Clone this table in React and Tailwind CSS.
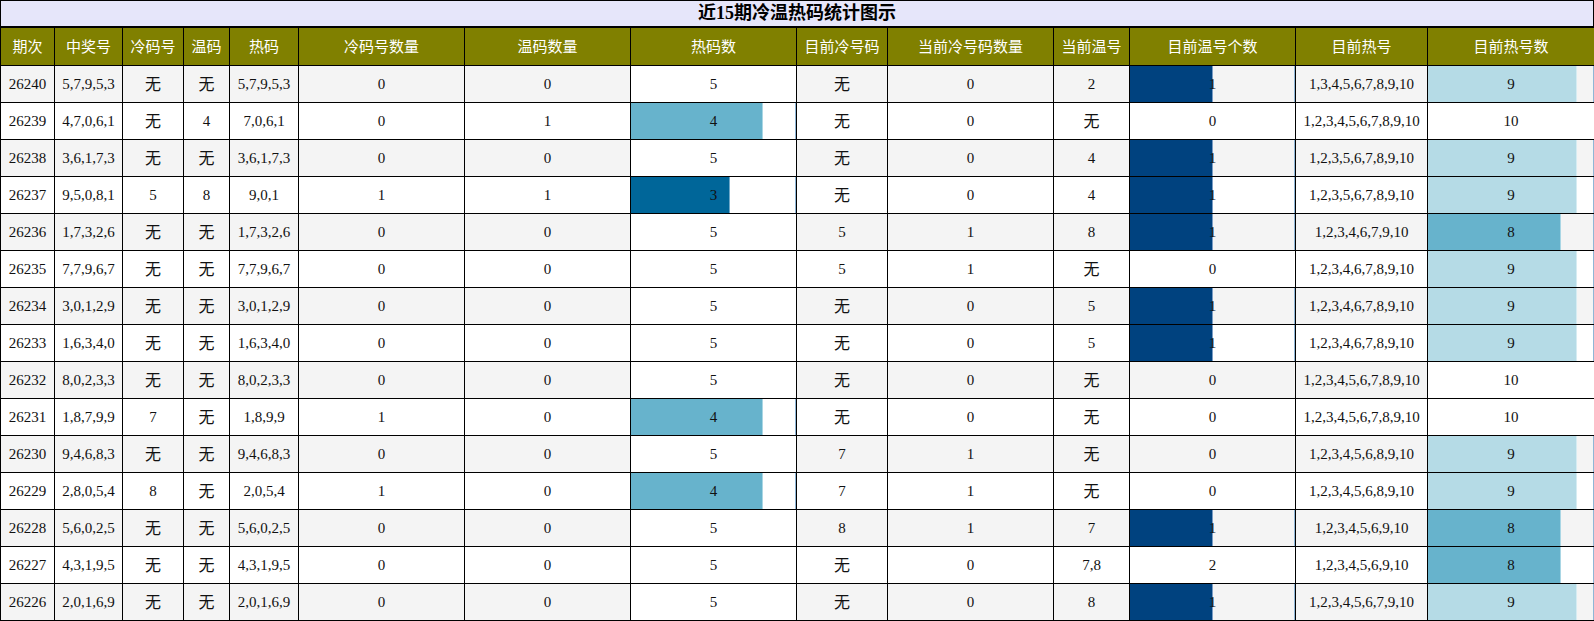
import React from 'react';

const HEAD = ['期次', '中奖号', '冷码号', '温码', '热码', '冷码号数量', '温码数量', '热码数', '目前冷号码', '当前冷号码数量', '当前温号', '目前温号个数', '目前热号', '目前热号数'];
const WIDTHS = ['w-[54px]', 'w-[68px]', 'w-[61px]', 'w-[46px]', 'w-[69px]', 'w-[166px]', 'w-[166px]', 'w-[166px]', 'w-[91px]', 'w-[166px]', 'w-[76px]', 'w-[166px]', 'w-[132px]', 'w-[167px]'];

const ROWS = [
  ['26240', '5,7,9,5,3', '无', '无', '5,7,9,5,3', '0', '0', 5, '无', '0', '2', 1, '1,3,4,5,6,7,8,9,10', 9],
  ['26239', '4,7,0,6,1', '无', '4', '7,0,6,1', '0', '1', 4, '无', '0', '无', 0, '1,2,3,4,5,6,7,8,9,10', 10],
  ['26238', '3,6,1,7,3', '无', '无', '3,6,1,7,3', '0', '0', 5, '无', '0', '4', 1, '1,2,3,5,6,7,8,9,10', 9],
  ['26237', '9,5,0,8,1', '5', '8', '9,0,1', '1', '1', 3, '无', '0', '4', 1, '1,2,3,5,6,7,8,9,10', 9],
  ['26236', '1,7,3,2,6', '无', '无', '1,7,3,2,6', '0', '0', 5, '5', '1', '8', 1, '1,2,3,4,6,7,9,10', 8],
  ['26235', '7,7,9,6,7', '无', '无', '7,7,9,6,7', '0', '0', 5, '5', '1', '无', 0, '1,2,3,4,6,7,8,9,10', 9],
  ['26234', '3,0,1,2,9', '无', '无', '3,0,1,2,9', '0', '0', 5, '无', '0', '5', 1, '1,2,3,4,6,7,8,9,10', 9],
  ['26233', '1,6,3,4,0', '无', '无', '1,6,3,4,0', '0', '0', 5, '无', '0', '5', 1, '1,2,3,4,6,7,8,9,10', 9],
  ['26232', '8,0,2,3,3', '无', '无', '8,0,2,3,3', '0', '0', 5, '无', '0', '无', 0, '1,2,3,4,5,6,7,8,9,10', 10],
  ['26231', '1,8,7,9,9', '7', '无', '1,8,9,9', '1', '0', 4, '无', '0', '无', 0, '1,2,3,4,5,6,7,8,9,10', 10],
  ['26230', '9,4,6,8,3', '无', '无', '9,4,6,8,3', '0', '0', 5, '7', '1', '无', 0, '1,2,3,4,5,6,8,9,10', 9],
  ['26229', '2,8,0,5,4', '8', '无', '2,0,5,4', '1', '0', 4, '7', '1', '无', 0, '1,2,3,4,5,6,8,9,10', 9],
  ['26228', '5,6,0,2,5', '无', '无', '5,6,0,2,5', '0', '0', 5, '8', '1', '7', 1, '1,2,3,4,5,6,9,10', 8],
  ['26227', '4,3,1,9,5', '无', '无', '4,3,1,9,5', '0', '0', 5, '无', '0', '7,8', 2, '1,2,3,4,5,6,9,10', 8],
  ['26226', '2,0,1,6,9', '无', '无', '2,0,1,6,9', '0', '0', 5, '无', '0', '8', 1, '1,2,3,4,5,6,7,9,10', 9],
];

// bar colours per column, keyed by value
const BAR = {
  7: { max: 5, colors: { 3: 'bg-[#006699] border-[#6fa8c8]', 4: 'bg-[#67b3cc] border-[#a9d6e4]' } },
  11: { max: 2, colors: { 1: 'bg-[#00427f] border-[#7a9cc4]' } },
  13: { max: 10, colors: { 8: 'bg-[#67b3cc] border-[#a9d6e4]', 9: 'bg-[#b5dbe6] border-[#d6ecf2]' } },
};

const BarCell = ({ value, conf, rowBg }) => {
  const full = value >= conf.max;
  const partial = value > 0 && !full;
  return (
    <td className={`p-0 border border-black ${full ? 'bg-white' : rowBg}`}>
      <div className="relative h-[36px] flex items-center justify-center">
        {partial && (
          <>
            <div
              className={`absolute left-0 top-0 bottom-0 border-r ${conf.colors[value]}`}
              style={{ width: `${(value / conf.max) * 100}%` }}
            />
            <div className="absolute right-0 top-0 bottom-0 w-px bg-[#8fb6d6]" />
          </>
        )}
        <span className="relative">{value}</span>
      </div>
    </td>
  );
};

export default function App() {
  return (
    <div className="w-[1594px] bg-white text-[15px] text-[#111]" style={{ fontFamily: '"Liberation Serif", "Noto Sans CJK SC", serif' }}>
      <div className="h-[27px] border border-black bg-[#e6e6fa] flex items-center justify-center text-[18px] font-bold text-black">
        近15期冷温热码统计图示
      </div>
      <table className="w-[1594px] table-fixed border-collapse">
        <colgroup>
          {WIDTHS.map((w, i) => (
            <col key={i} className={w} />
          ))}
        </colgroup>
        <thead>
          <tr className="bg-[#808000] text-white">
            {HEAD.map((h) => (
              <th key={h} className="h-[38px] border border-black font-normal text-[15px] px-0" style={{ fontFamily: '"Noto Sans CJK SC", sans-serif' }}>
                {h}
              </th>
            ))}
          </tr>
        </thead>
        <tbody>
          {ROWS.map((row, ri) => {
            const rowBg = ri % 2 === 0 ? 'bg-[#f4f4f4]' : 'bg-white';
            return (
              <tr key={row[0]} className={rowBg}>
                {row.map((cell, ci) =>
                  BAR[ci] ? (
                    <BarCell key={ci} value={cell} conf={BAR[ci]} rowBg={rowBg} />
                  ) : (
                    <td key={ci} className="h-[37px] p-0 border border-black text-center whitespace-nowrap">
                      {cell === '无' ? <span className="text-[16px]" style={{ fontFamily: '"Noto Sans CJK SC", sans-serif' }}>无</span> : cell}
                    </td>
                  )
                )}
              </tr>
            );
          })}
        </tbody>
      </table>
    </div>
  );
}
